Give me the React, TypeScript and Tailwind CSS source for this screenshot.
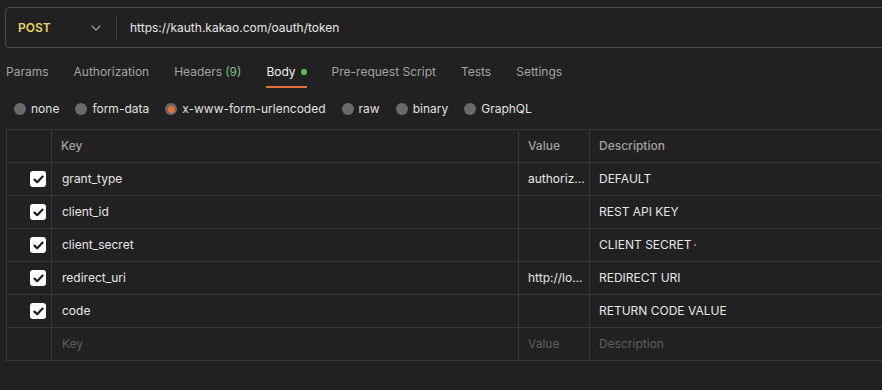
import type React from "react"

const tabs = [
  { label: "Params" },
  { label: "Authorization" },
  { label: "Headers", count: "(9)" },
  { label: "Body", active: true },
  { label: "Pre-request Script" },
  { label: "Tests" },
  { label: "Settings" },
]

const bodyTypes = [
  { label: "none" },
  { label: "form-data" },
  { label: "x-www-form-urlencoded", selected: true },
  { label: "raw" },
  { label: "binary" },
  { label: "GraphQL" },
]

const rows = [
  { key: "grant_type", value: "authoriz...", desc: "DEFAULT" },
  { key: "client_id", value: "", desc: "REST API KEY" },
  { key: "client_secret", value: "", desc: "CLIENT SECRET", dot: true },
  { key: "redirect_uri", value: "http://lo...", desc: "REDIRECT URI" },
  { key: "code", value: "", desc: "RETURN CODE VALUE" },
]

function Checkbox() {
  return (
    <div className="w-[16px] h-[16px] rounded-[3px] bg-white flex items-center justify-center">
      <svg width="11" height="9" viewBox="0 0 11 9" fill="none">
        <path d="M1.5 4.6 L4.2 7.2 L9.6 1.6" stroke="#1c1c1c" strokeWidth="2.2" strokeLinecap="round" strokeLinejoin="round" />
      </svg>
    </div>
  )
}

function Row({ children }: { children: React.ReactNode }) {
  return (
    <div className="grid grid-cols-[45px_467px_71px_1fr] h-[33px] border-b border-[#373737] text-[12px]">
      {children}
    </div>
  )
}

export default function App() {
  return (
    <div
      className="w-[882px] h-[390px] bg-[#212121] overflow-hidden text-[#e6e6e6]"
      style={{ fontFamily: "Inter, 'Noto Sans', sans-serif" }}
    >
      {/* url bar */}
      <div className="pt-[7px] pl-[5px]">
        <div className="w-[900px] h-[41px] border border-[#4c4c4c] rounded-[4px] flex items-center">
          <div className="w-[110px] flex items-center pl-[12px]">
            <span className="text-[12px] font-semibold text-[#e9d66b]">POST</span>
            <svg className="ml-[40px]" width="10" height="6" viewBox="0 0 10 6" fill="none">
              <path d="M1 1 L5 5 L9 1" stroke="#9a9a9a" strokeWidth="1.2" strokeLinecap="round" strokeLinejoin="round" />
            </svg>
          </div>
          <div className="w-px h-[24px] bg-[#3e3e3e]" />
          <span className="ml-[13px] text-[12px] text-[#e6e6e6]">https://kauth.kakao.com/oauth/token</span>
        </div>
      </div>

      {/* tabs */}
      <div className="flex pl-[6px] gap-[25px] mt-[15px] h-[28px] text-[12px]">
        {tabs.map((t) => (
          <div key={t.label} className="relative flex items-start">
            <span className={t.active ? "text-[#f0f0f0]" : "text-[#a3a3a3]"}>{t.label}</span>
            {t.count && <span className="ml-[3px] text-[#7fbf7f]">{t.count}</span>}
            {t.active && <span className="ml-[5px] mt-[6px] w-[6px] h-[6px] rounded-full bg-[#5ec25a]" />}
            {t.active && <div className="absolute left-0 right-0 bottom-[3px] h-[2px] bg-[#e2723d]" />}
          </div>
        ))}
      </div>

      {/* body type radios */}
      <div className="flex items-center pl-[14px] mt-[8px] h-[20px] gap-[16px] text-[12px] text-[#e0e0e0]">
        {bodyTypes.map((b) => (
          <div key={b.label} className="flex items-center gap-[5px]">
            <div className="w-[12px] h-[12px] rounded-full bg-[#6a6a6a] flex items-center justify-center">
              {b.selected && <div className="w-[7px] h-[7px] rounded-full bg-[#e8703a]" />}
            </div>
            <span>{b.label}</span>
          </div>
        ))}
      </div>

      {/* table */}
      <div className="ml-[6px] mt-[10px] w-[900px] border-t border-l border-[#373737]">
        <Row>
          <div className="border-r border-[#373737]" />
          <div className="border-r border-[#373737] flex items-center pl-[9px] font-medium text-[#a0a0a0]">Key</div>
          <div className="border-r border-[#373737] flex items-center pl-[9px] font-medium text-[#a0a0a0]">Value</div>
          <div className="flex items-center pl-[9px] font-medium text-[#a0a0a0]">Description</div>
        </Row>
        {rows.map((r) => (
          <Row key={r.key}>
            <div className="border-r border-[#373737] flex items-center justify-end pr-[5px]">
              <Checkbox />
            </div>
            <div className="border-r border-[#373737] flex items-center pl-[10px]">{r.key}</div>
            <div className="border-r border-[#373737] flex items-center pl-[9px]">{r.value}</div>
            <div className="flex items-center pl-[9px]">
              {r.desc}
              {r.dot && <span className="ml-[2px] w-[2px] h-[2px] bg-[#777]" />}
            </div>
          </Row>
        ))}
        <Row>
          <div className="border-r border-[#373737]" />
          <div className="border-r border-[#373737] flex items-center pl-[10px] text-[#5f5f5f]">Key</div>
          <div className="border-r border-[#373737] flex items-center pl-[9px] text-[#5f5f5f]">Value</div>
          <div className="flex items-center pl-[9px] text-[#5f5f5f]">Description</div>
        </Row>
      </div>
    </div>
  )
}
